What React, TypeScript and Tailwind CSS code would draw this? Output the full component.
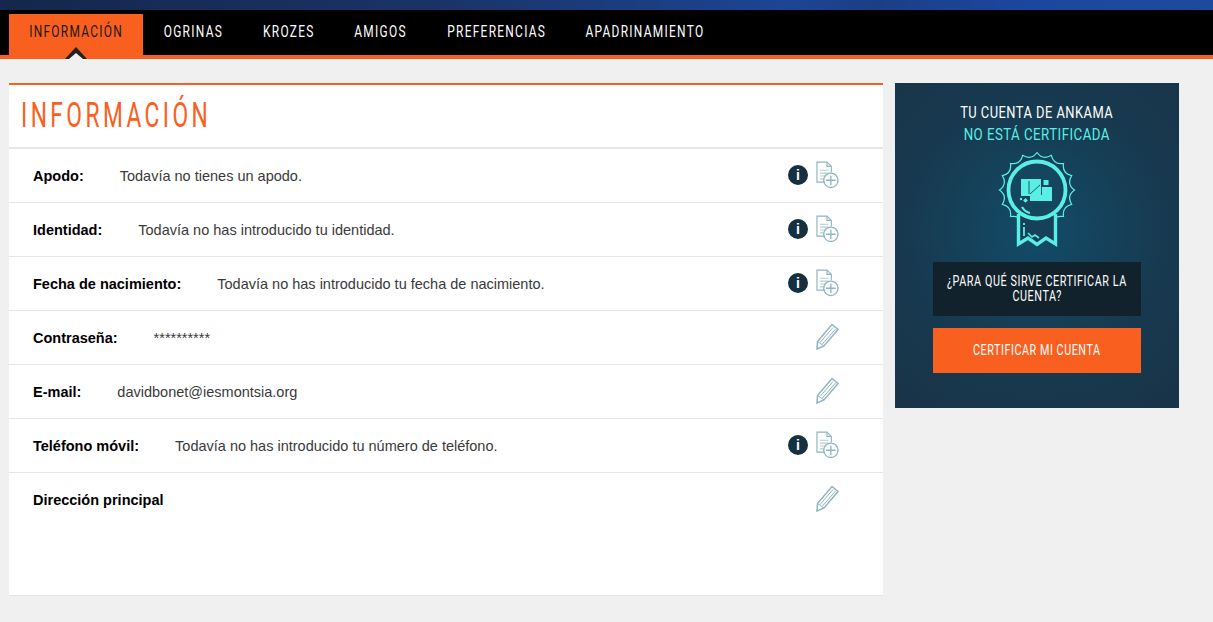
const NAV = [
  { label: "INFORMACIÓN", width: "w-[134px]" },
  { label: "OGRINAS", width: "w-[101px]" },
  { label: "KROZES", width: "w-[90px]" },
  { label: "AMIGOS", width: "w-[93px]" },
  { label: "PREFERENCIAS", width: "w-[139px]" },
  { label: "APADRINAMIENTO", width: "w-[158px]" },
];

const ROWS = [
  { label: "Apodo:", value: "Todavía no tienes un apodo.", add: true },
  { label: "Identidad:", value: "Todavía no has introducido tu identidad.", add: true },
  { label: "Fecha de nacimiento:", value: "Todavía no has introducido tu fecha de nacimiento.", add: true },
  { label: "Contraseña:", value: "**********", add: false },
  { label: "E-mail:", value: "davidbonet@iesmontsia.org", add: false },
  { label: "Teléfono móvil:", value: "Todavía no has introducido tu número de teléfono.", add: true },
  { label: "Dirección principal", value: "", add: false },
];

// no condensed face installed, so Roboto is squeezed horizontally
function Narrow({ children, className = "" }: { children: React.ReactNode; className?: string }) {
  return (
    <span className={`inline-block shrink-0 whitespace-nowrap font-['Roboto',sans-serif] ${className}`}>{children}</span>
  );
}

function InfoIcon() {
  return (
    <span className="flex h-5 w-5 items-center justify-center rounded-full bg-[#15303f] text-[14px] font-bold leading-none text-white">
      i
    </span>
  );
}

function DocPlusIcon() {
  return (
    <svg width="23" height="28" viewBox="0 0 24 28" fill="none" stroke="#8fb5c0" strokeWidth="1.2">
      <path d="M9.5 21.5H1V.6H11.5L16 5V11" />
      <path d="M11.5 .6V5H16" />
      <path d="M4 9H13M4 12H13M4 15H10M4 18H9" stroke="#b5ced5" />
      <circle cx="15.5" cy="19.5" r="7.5" strokeWidth="1.4" />
      <path d="M15.5 14.5V24.5M10.5 19.5H20.5" strokeWidth="1.4" />
    </svg>
  );
}

function PencilIcon() {
  return (
    <svg width="24" height="28" viewBox="0 0 24 28" fill="none" stroke="#8fb5c0" strokeWidth="1.5">
      <path d="M17 1.5L23 6.5L9 23L2 26L2.5 18.5Z" />
      <path d="M2.5 18.5L9 23M5 19.5L18 4.5M7.5 21L20.5 6" strokeWidth="1" />
    </svg>
  );
}

function scallopPath(cx: number, cy: number, outer: number, inner: number, count: number) {
  let d = "";
  for (let i = 0; i < count; i++) {
    const a = (i / count) * Math.PI * 2 - Math.PI / 2;
    const m = ((i + 0.5) / count) * Math.PI * 2 - Math.PI / 2;
    const b = ((i + 1) / count) * Math.PI * 2 - Math.PI / 2;
    if (i === 0) d += `M${cx + outer * Math.cos(a)} ${cy + outer * Math.sin(a)}`;
    d += `Q${cx + inner * Math.cos(m)} ${cy + inner * Math.sin(m)} ${cx + outer * Math.cos(b)} ${cy + outer * Math.sin(b)}`;
  }
  return d + "Z";
}

function Badge() {
  const teal = "#5aefe4";
  const dark = "#14465f";
  return (
    <svg width="80" height="96" viewBox="0 0 80 96" fill="none" stroke={teal}>
      <path d={scallopPath(40, 38, 37.5, 30, 16)} strokeWidth="1.2" />
      <path d="M21.5 62V92L31 86L40 92.5L49 86L58.5 92V62" strokeWidth="3.4" fill="#17415a" />
      <circle cx="40" cy="38" r="28.5" strokeWidth="3.8" fill={dark} />
      <rect x="24" y="27" width="20" height="17" fill={teal} stroke="none" />
      <rect x="33" y="35" width="22" height="14" fill={teal} stroke="none" />
      <rect x="44" y="27" width="11" height="8" fill={dark} stroke="none" />
      <rect x="46.5" y="28" width="5" height="5" fill={teal} stroke="none" />
      <path d="M32 29V42M44.5 31V43M33 42L43 33" stroke={dark} strokeWidth="0.9" />
      <path d="M25 55Q28 60 33 61" strokeWidth="2.2" />
      <circle cx="24" cy="47" r="1.2" fill={teal} stroke="none" />
      <path d="M28.5 46l2.4 2.4-2.4 2.4-2.4-2.4Z" fill={teal} stroke="none" />
      <path d="M27 71V73M27 75V84" strokeWidth="1.8" />
      <path d="M31 81L35 85L38 83L42 86" strokeWidth="1.6" />
    </svg>
  );
}

export default function App() {
  return (
    <div className="h-[622px] overflow-hidden bg-[#f0f0f0] font-['Liberation_Sans',Arial,sans-serif]">
      {/* Header */}
      <div className="h-2.5 bg-[linear-gradient(90deg,#14274c_0%,#1a3366_35%,#1c4594_65%,#1b3f86_72%,#1c47a0_85%,#1d4a9c_100%)]" />
      <nav className="flex h-[49px] items-end border-b-4 border-[#f96020] bg-black pl-[9px]">
        {NAV.map((item, i) => (
          <a
            key={item.label}
            className={`relative flex h-[41px] ${item.width} justify-center pt-[7px] ${i === 0 ? "bg-[#f96020] text-[#1a1a1a]" : "text-white"}`}
          >
            <Narrow className="scale-x-[0.7] text-[17px] leading-5 tracking-[1.85px]">{item.label}</Narrow>
            {i === 0 && (
              <>
                <span className="absolute -bottom-1 left-[56px] h-0 w-0 border-x-[11px] border-b-[12px] border-x-transparent border-b-[#222]" />
                <span className="absolute -bottom-1 left-[60px] h-0 w-0 border-x-[7px] border-b-[6px] border-x-transparent border-b-[#f0f0f0]" />
              </>
            )}
          </a>
        ))}
      </nav>

      <div className="flex items-start gap-3 pl-[9px] pt-6">
        {/* Main card */}
        <main className="h-[513px] w-[874px] border-t-2 border-b border-t-[#f96020] border-b-[#e3e3e3] bg-white">
          <h1 className="h-[64px] border-b-2 border-[#e6e6e6] pl-3 pt-[9px] text-[#f96020]">
            <Narrow className="origin-left scale-x-[0.65] text-[35px] leading-[44px] tracking-[5.3px]">INFORMACIÓN</Narrow>
          </h1>
          {ROWS.map((row, i) => (
            <div
              key={row.label}
              className={`flex h-[54px] items-center pl-6 pr-11 text-[14.5px] ${i < ROWS.length - 1 ? "border-b border-[#e6e6e6]" : ""}`}
            >
              <span className="mt-0.5 font-bold text-black">{row.label}</span>
              <span className="ml-9 mt-0.5 text-[#3a3a3a]">{row.value}</span>
              <div className="mb-0.5 ml-auto flex items-center gap-2">
                {row.add && <InfoIcon />}
                {row.add ? <DocPlusIcon /> : <PencilIcon />}
              </div>
            </div>
          ))}
        </main>

        {/* Certification panel */}
        <aside className="flex h-[325px] w-[284px] flex-col items-center bg-[radial-gradient(circle_at_50%_45%,#124c69_0%,#173a50_55%,#1a3347_100%)] pt-[19px]">
          <Narrow className="scale-x-[0.76] text-[17px] leading-5 tracking-[0.6px] text-white">TU CUENTA DE ANKAMA</Narrow>
          <Narrow className="mt-0.5 scale-x-[0.78] text-[17px] leading-5 tracking-[0.6px] text-[#5aefe4]">NO ESTÁ CERTIFICADA</Narrow>
          <div className="mt-[8px]">
            <Badge />
          </div>
          <a className="mt-[14px] flex h-[54px] w-[208px] flex-col items-center justify-center bg-[#12222c] text-white">
            <Narrow className="scale-x-[0.77] text-[14px] leading-[15px] tracking-[0.75px]">¿PARA QUÉ SIRVE CERTIFICAR LA</Narrow>
            <Narrow className="scale-x-[0.77] text-[14px] leading-[15px] tracking-[0.75px]">CUENTA?</Narrow>
          </a>
          <a className="mt-3 flex h-[45px] w-[208px] items-center justify-center bg-[#f96020] text-white">
            <Narrow className="scale-x-[0.77] text-[14px] tracking-[0.7px]">CERTIFICAR MI CUENTA</Narrow>
          </a>
        </aside>
      </div>
    </div>
  );
}
